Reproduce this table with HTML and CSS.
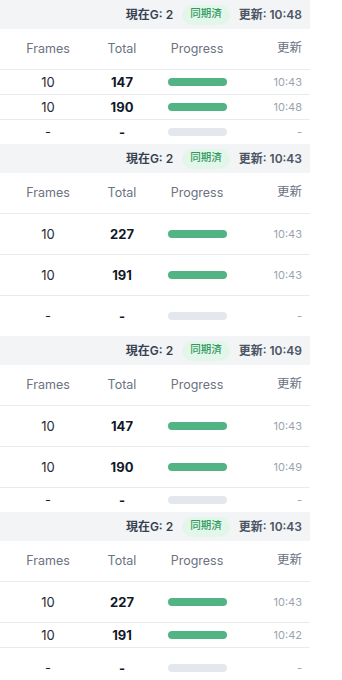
FILE: index.html
```html
<!DOCTYPE html>
<html lang="ja">
<head>
<meta charset="utf-8">
<link rel="stylesheet" href="styles.css">
</head>
<body>
<div class="wrap">
  <section class="block">
    <div class="bar"><span class="cur">現在G: 2</span><span class="badge">同期済</span><span class="upd">更新: 10:48</span></div>
    <div class="row head"><span class="c1">Frames</span><span class="c2">Total</span><span class="c3">Progress</span><span class="c4">更新</span></div>
    <div class="row short"><span class="c1">10</span><span class="c2 b">147</span><span class="c3"><i class="pb on"></i></span><span class="c4 t">10:43</span></div>
    <div class="row short"><span class="c1">10</span><span class="c2 b">190</span><span class="c3"><i class="pb on"></i></span><span class="c4 t">10:48</span></div>
    <div class="row short last"><span class="c1">-</span><span class="c2 b">-</span><span class="c3"><i class="pb"></i></span><span class="c4 t">-</span></div>
  </section>
  <section class="block">
    <div class="bar"><span class="cur">現在G: 2</span><span class="badge">同期済</span><span class="upd">更新: 10:43</span></div>
    <div class="row head"><span class="c1">Frames</span><span class="c2">Total</span><span class="c3">Progress</span><span class="c4">更新</span></div>
    <div class="row"><span class="c1">10</span><span class="c2 b">227</span><span class="c3"><i class="pb on"></i></span><span class="c4 t">10:43</span></div>
    <div class="row"><span class="c1">10</span><span class="c2 b">191</span><span class="c3"><i class="pb on"></i></span><span class="c4 t">10:43</span></div>
    <div class="row last"><span class="c1">-</span><span class="c2 b">-</span><span class="c3"><i class="pb"></i></span><span class="c4 t">-</span></div>
  </section>
  <section class="block">
    <div class="bar"><span class="cur">現在G: 2</span><span class="badge">同期済</span><span class="upd">更新: 10:49</span></div>
    <div class="row head"><span class="c1">Frames</span><span class="c2">Total</span><span class="c3">Progress</span><span class="c4">更新</span></div>
    <div class="row"><span class="c1">10</span><span class="c2 b">147</span><span class="c3"><i class="pb on"></i></span><span class="c4 t">10:43</span></div>
    <div class="row"><span class="c1">10</span><span class="c2 b">190</span><span class="c3"><i class="pb on"></i></span><span class="c4 t">10:49</span></div>
    <div class="row short last"><span class="c1">-</span><span class="c2 b">-</span><span class="c3"><i class="pb"></i></span><span class="c4 t">-</span></div>
  </section>
  <section class="block">
    <div class="bar"><span class="cur">現在G: 2</span><span class="badge">同期済</span><span class="upd">更新: 10:43</span></div>
    <div class="row head"><span class="c1">Frames</span><span class="c2">Total</span><span class="c3">Progress</span><span class="c4">更新</span></div>
    <div class="row"><span class="c1">10</span><span class="c2 b">227</span><span class="c3"><i class="pb on"></i></span><span class="c4 t">10:43</span></div>
    <div class="row short"><span class="c1">10</span><span class="c2 b">191</span><span class="c3"><i class="pb on"></i></span><span class="c4 t">10:42</span></div>
    <div class="row last"><span class="c1">-</span><span class="c2 b">-</span><span class="c3"><i class="pb"></i></span><span class="c4 t">-</span></div>
  </section>
</div>
</body>
</html>
```
FILE: styles.css
```css
html, body {
  margin: 0;
  padding: 0;
  background: #ffffff;
}
body {
  font-family: Inter, "Noto Sans CJK JP", sans-serif;
  color: #1f2937;
}
.wrap {
  width: 310px;
}
.bar {
  height: 29px;
  background: #f3f4f6;
  display: flex;
  align-items: center;
  justify-content: flex-end;
  gap: 9px;
  padding-right: 8px;
  box-sizing: border-box;
  font-size: 12px;
  font-weight: 600;
  color: #4b5563;
  line-height: 1;
}
.cur {
  color: #374151;
}
.badge {
  display: inline-flex;
  align-items: center;
  height: 20px;
  padding: 0 8px;
  border-radius: 10px;
  background: #e3f6ea;
  color: #2f9a5e;
  font-size: 10.5px;
  font-weight: 500;
}
.row {
  display: grid;
  grid-template-columns: 96px 52px 98px 64px;
  align-items: center;
  height: 41px;
  box-sizing: border-box;
  border-bottom: 1px solid #e8eaee;
  font-size: 13px;
  line-height: 16px;
}
.row.short {
  height: 25px;
}
.row.last {
  border-bottom: none;
  height: 40px;
}
.row.short.last {
  height: 24px;
}
.row.head {
  color: #6b7280;
  height: 41px;
  font-size: 12.5px;
}
.c1, .c2, .c3 {
  text-align: center;
}
.c3 {
  display: flex;
  justify-content: center;
}
.c4 {
  text-align: right;
  padding-right: 8px;
}
.head .c4 {
  position: relative;
  top: -1px;
}
.b {
  font-weight: 700;
  color: #111827;
}
.t {
  font-size: 11px;
  color: #9ca3af;
}
.pb {
  display: block;
  width: 59px;
  height: 8px;
  border-radius: 4px;
  background: #e5e7ee;
}
.pb.on {
  background: #52b384;
}
```
